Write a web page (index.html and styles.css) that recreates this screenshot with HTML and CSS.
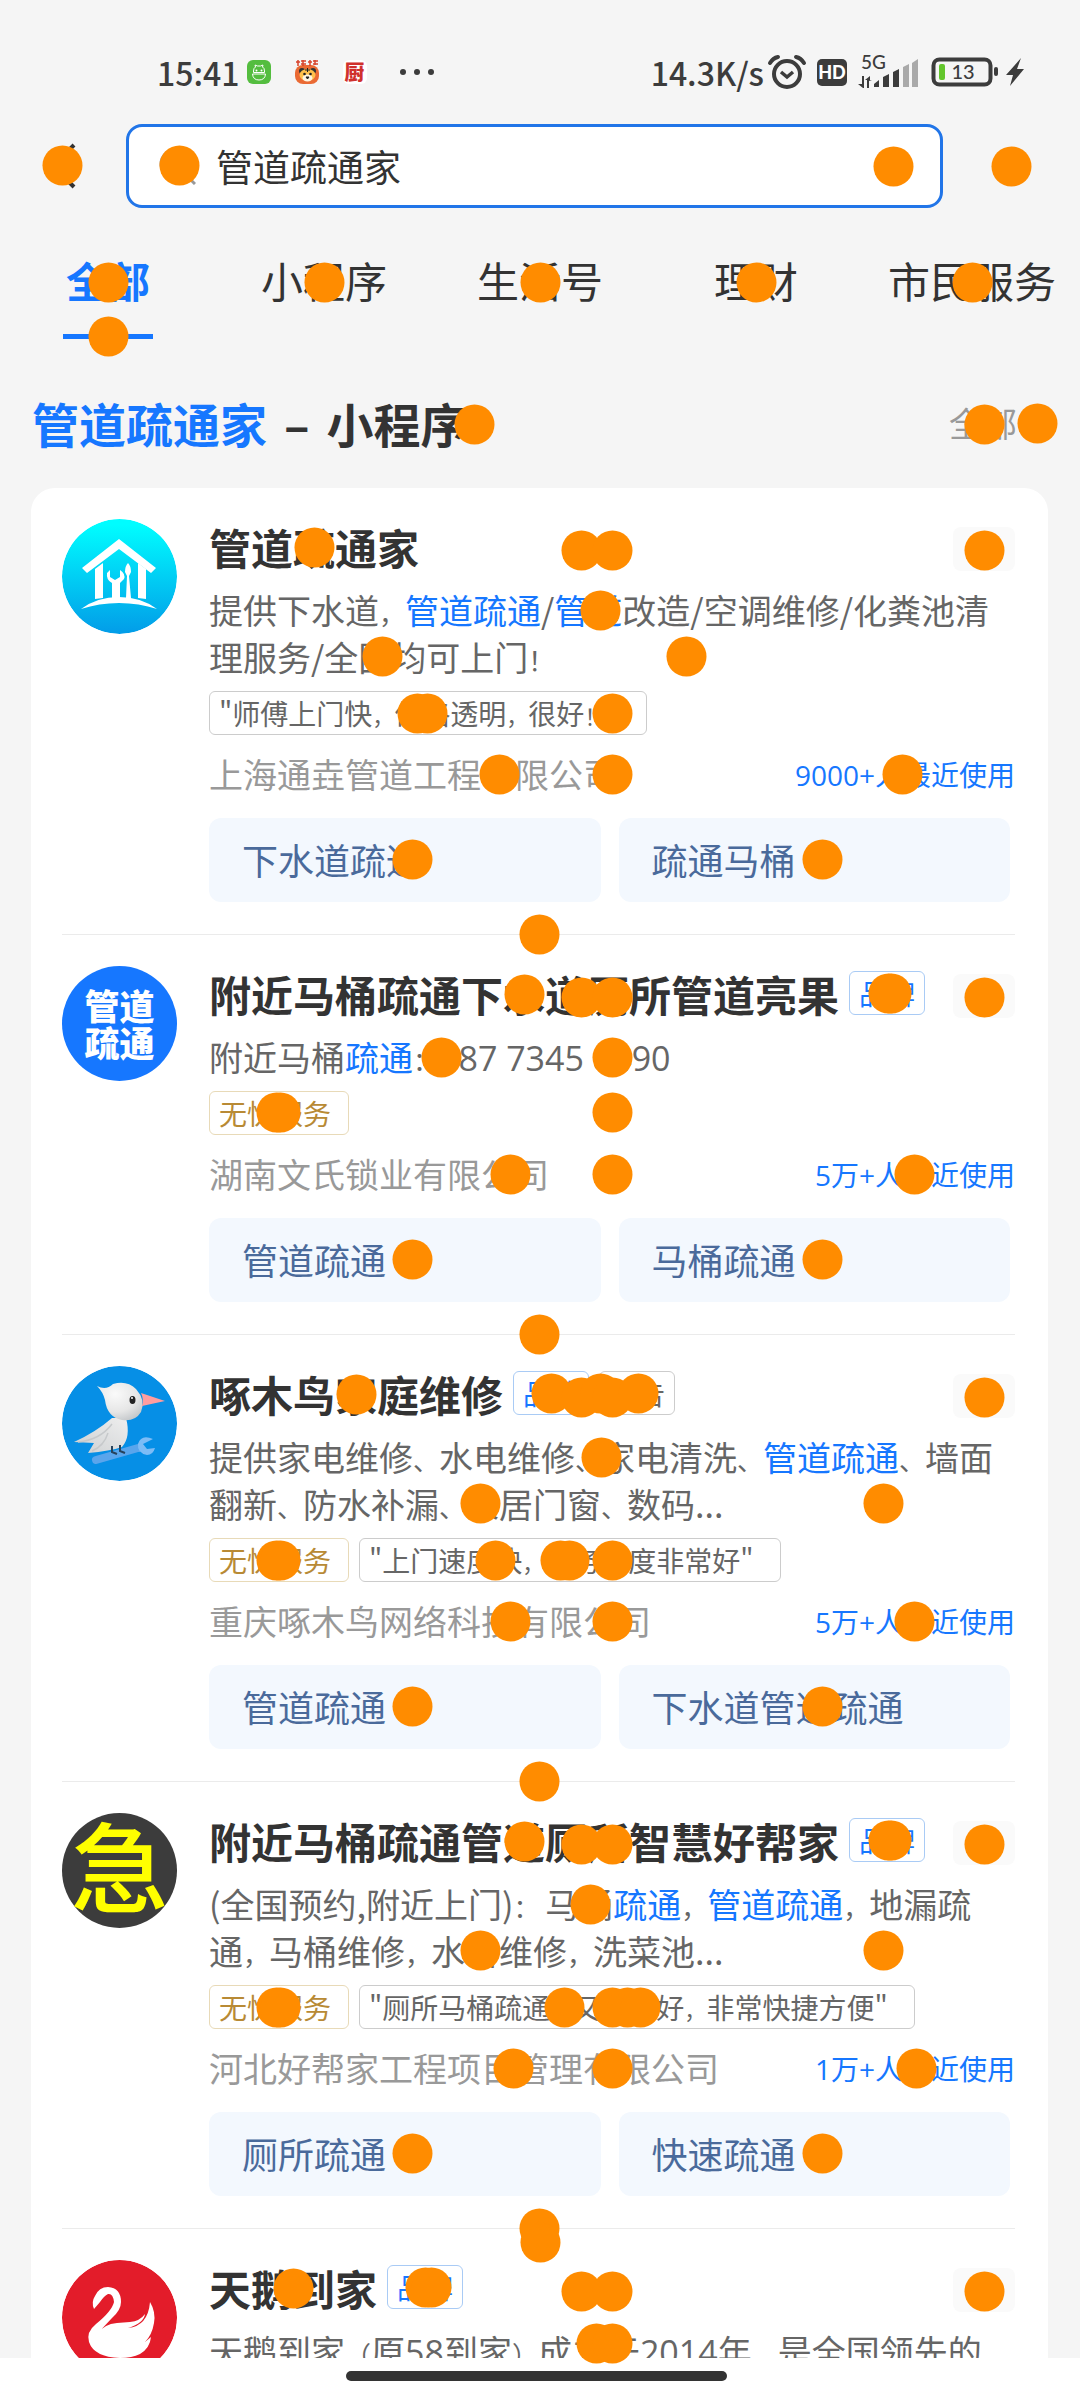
FILE: index.html
```html
<!DOCTYPE html>
<html lang="zh-CN">
<head>
<meta charset="utf-8">
<meta name="viewport" content="width=device-width, initial-scale=1">
<title>管道疏通家</title>
<link rel="stylesheet" href="styles.css">
</head>
<body>
<div class="status">
  <span class="status-text">15:41</span>
  <div class="status-apps">
    <svg width="24" height="24" viewBox="0 0 24 24"><rect width="24" height="24" rx="6" fill="#54bd3f"/><path d="M6.500 12.500V11q0-3 2-4L8 5l2.500 1h3L16 5l-.5 2q2 1 2 4v1.500zM5.500 14h13q-.5 6-6.500 6t-6.500-6z" fill="none" stroke="#fff" stroke-width="1"/><circle cx="9.500" cy="10.500" r="1" fill="#fff"/><circle cx="14.500" cy="10.500" r="1" fill="#fff"/></svg>
    <svg width="24" height="24" viewBox="0 0 24 24"><rect y="5" width="24" height="19" rx="8" fill="#ea6a34"/><path d="M1 2h4M3 0v6M6 1h5M8 0v6M6 4h5M13 2h4M15 0v6M18 1h5M20 0v5M18 4h5" stroke="#d8432c" stroke-width="1.500"/><circle cx="7" cy="11" r="3" fill="#333"/><circle cx="18" cy="11" r="3" fill="#333"/><ellipse cx="12.500" cy="15" rx="8" ry="6" fill="#ffc04a"/><ellipse cx="12.500" cy="18" rx="5" ry="3.500" fill="#fff6e2"/><circle cx="9.500" cy="14" r="1.300" fill="#222"/><circle cx="15.500" cy="14" r="1.300" fill="#222"/><path d="M11 17h3l-1.500 2zM10 10h5M12.500 8v4" stroke="#222" fill="#222"/></svg>
    <span class="app-chef">厨</span>
  </div>
  <svg class="status-more" width="34" height="8" viewBox="0 0 34 8" fill="#3c3c3c"><circle cx="3" cy="4" r="3"/><circle cx="17" cy="4" r="3"/><circle cx="31" cy="4" r="3"/></svg>
  <span class="status-text status-speed">14.3K/s</span>
  <svg class="status-icons" width="260" height="36" viewBox="0 0 260 36">
    <g fill="none" stroke="#3c3c3c"><circle cx="23" cy="20" r="13" stroke-width="4"/><path d="M17 18l6 5 6-5" stroke-width="3.500"/><path d="M6 9Q9 4 14 3M40 9Q37 4 32 3" stroke-width="4" stroke-linecap="round"/></g>
    <rect x="53" y="5" width="30" height="27" rx="5" fill="#3c3c3c"/><text class="svg-hd" x="68" y="25">HD</text>
    <text class="svg-5g" x="97" y="15">5G</text>
    <g fill="#3c3c3c"><path d="M98 22v8h-4l5 4h1V22zM103 34v-8h-2l5-4v4h2l-3 1v7z"/><path d="M110 33v-3l5-4v7zM119 33V23l6-3v13zM129 33V18l6-3v18z"/></g>
    <path d="M139 33V13l6-3v23zM148 33V9l6-4v28z" fill="#a9a9a9"/>
    <rect x="169.500" y="5.500" width="57" height="25" rx="6" fill="none" stroke="#3c3c3c" stroke-width="4"/><rect x="175" y="10" width="6" height="16" rx="2" fill="#62c52c"/><text class="svg-bat" x="199" y="25">13</text><rect x="230" y="13" width="4" height="9" rx="2" fill="#3c3c3c"/>
    <path d="M257 4l-15 17h7l-3 11 14-17h-7z" fill="#3c3c3c"/>
  </svg>
</div>

<form class="search">
  <button type="button" class="icon-btn" aria-label="返回"><svg width="28" height="48" viewBox="0 0 28 48"><path d="M25 3L4 24l21 21" fill="none" stroke="#333" stroke-width="4"/></svg></button>
  <div class="search-box">
    <svg width="38" height="38" viewBox="0 0 38 38"><circle cx="17" cy="17" r="14" fill="none" stroke="#999" stroke-width="3"/><path d="M27 27l10 10" stroke="#999" stroke-width="3"/></svg>
    <input type="text" value="管道疏通家" aria-label="搜索">
    <button type="reset" class="clear-btn" aria-label="清除"><svg width="36" height="36" viewBox="0 0 36 36"><circle cx="18" cy="18" r="16" fill="#ccc"/><path d="M12 12l12 12M24 12L12 24" stroke="#fff" stroke-width="3"/></svg></button>
  </div>
  <button type="button" class="icon-btn" aria-label="更多"><svg width="36" height="8" viewBox="0 0 36 8" fill="#333"><circle cx="4" cy="4" r="3"/><circle cx="18" cy="4" r="3"/><circle cx="32" cy="4" r="3"/></svg></button>
</form>

<nav class="tabs">
  <a href="#" class="tab tab-active">全部</a>
  <a href="#" class="tab">小程序</a>
  <a href="#" class="tab">生活号</a>
  <a href="#" class="tab">理财</a>
  <a href="#" class="tab">市民服务</a>
</nav>

<header class="section-head">
  <h1><em>管道疏通家</em><span class="dash">–</span>小程序</h1>
  <a href="#" class="more">全部<svg width="16" height="26" viewBox="0 0 16 26"><path d="M3 3l10 10L3 23" fill="none" stroke="#999" stroke-width="3"/></svg></a>
</header>

<main class="results">
  <article class="item">
    <svg class="avatar" viewBox="0 0 115 115">
      <defs><linearGradient id="sky" x1="0" y1="0" x2="0" y2="1"><stop offset="0.050" stop-color="#00fdff"/><stop offset="1" stop-color="#029ce8"/></linearGradient></defs>
      <circle cx="57.500" cy="57.500" r="57.500" fill="url(#sky)"/>
      <g fill="#fff"><path d="M57 20l37 29-5 5-32-24-32 24-5-5z"/><path d="M33 50l8-6v35l-8 1zM76 44l8 6v30l-8-1z"/><path d="M19 90q16-12 38-12t38 12q-18-6-38-6t-38 6z"/><path d="M50 80V64q-6-3-5-10l3-3v7l5 3 5-3v-7q6 4 4 9l-4 4v16zM64 79l1-22-2-4q0-6 3-9 3 3 3 9l-2 4 2 22z"/></g>
    </svg>
    <div class="body">
      <div class="title-row"><h2>管道疏通家</h2><button class="feedback" aria-label="反馈"><i></i></button></div>
      <p class="desc">提供下水道<s>，</s><em>管道疏通</em>/<em>管道</em>改造/空调维修/化粪池清<br>理服务/全国均可上门<s>！</s></p>
      <div class="tags"><span class="tag tag-quote">"师傅上门快<s>，</s>价格透明<s>，</s>很好<s>！</s>"</span></div>
      <div class="meta"><span>上海通垚管道工程有限公司</span><strong><span class="num">9000+</span>人最近使用</strong></div>
      <div class="links"><a href="#">下水道疏通</a><a href="#">疏通马桶</a></div>
    </div>
  </article>

  <article class="item">
    <div class="avatar avatar-blue">管道<br>疏通</div>
    <div class="body">
      <div class="title-row"><h2>附近马桶疏通下水道厕所管道亮果</h2><span class="tag tag-brand">品牌</span><button class="feedback" aria-label="反馈"><i></i></button></div>
      <p class="desc">附近马桶<em>疏通</em><s>：</s><span class="num">187 7345 8490</span></p>
      <div class="tags"><span class="tag tag-gold">无忧服务</span></div>
      <div class="meta"><span>湖南文氏锁业有限公司</span><strong><span class="num">5</span>万<span class="num">+</span>人最近使用</strong></div>
      <div class="links"><a href="#">管道疏通</a><a href="#">马桶疏通</a></div>
    </div>
  </article>

  <article class="item">
    <svg class="avatar" viewBox="0 0 115 115">
      <defs><radialGradient id="head" cx="0.400" cy="0.300" r="0.800"><stop offset="0" stop-color="#fafafa"/><stop offset="0.600" stop-color="#e6e6e6"/><stop offset="1" stop-color="#bfc3c6"/></radialGradient><linearGradient id="wing" x1="1" y1="0" x2="0" y2="1"><stop offset="0" stop-color="#eee"/><stop offset="1" stop-color="#cdd0d2"/></linearGradient></defs>
      <circle cx="57.500" cy="57.500" r="57.500" fill="#068fe6"/>
      <path d="M34 94l42-12" stroke="#5aa5ec" stroke-width="8" stroke-linecap="round"/><path d="M91 73q-12-5-15 5-1 9 9 11 6 0 8-7l-8 1-4-5z" fill="#7dbcf6"/>
      <path d="M50 52Q34 66 12 76l20 1-6 10q22-2 34-6 9-10 4-29z" fill="url(#wing)"/><path d="M16 76q22-2 34-18M30 85q12-5 16-18" fill="none" stroke="#c6c9cb" stroke-width="1.500"/>
      <path d="M35 20q9 5 16-2 14-4 23 5 10 11 5 23-6 10-19 8-15-3-17-20-2-8-8-14z" fill="url(#head)"/>
      <path d="M79 27l24 8-23 5q2-7-1-13z" fill="#ff9d9f"/><ellipse cx="70.500" cy="34" rx="3" ry="4" fill="#222"/><circle cx="70" cy="32" r="1" fill="#fff"/>
      <path d="M50 80v6l5 2M58 79v6l5 2" fill="none" stroke="#27435d" stroke-width="2"/>
    </svg>
    <div class="body">
      <div class="title-row"><h2>啄木鸟家庭维修</h2><span class="tag tag-brand">品牌</span><span class="tag tag-ad">广告</span><button class="feedback" aria-label="反馈"><i></i></button></div>
      <p class="desc">提供家电维修<s>、</s>水电维修<s>、</s>家电清洗<s>、</s><em>管道疏通</em><s>、</s>墙面<br>翻新<s>、</s>防水补漏<s>、</s>家居门窗<s>、</s>数码...</p>
      <div class="tags"><span class="tag tag-gold">无忧服务</span><span class="tag tag-quote">"上门速度快<s>，</s>服务态度非常好"</span></div>
      <div class="meta"><span>重庆啄木鸟网络科技有限公司</span><strong><span class="num">5</span>万<span class="num">+</span>人最近使用</strong></div>
      <div class="links"><a href="#">管道疏通</a><a href="#">下水道管道疏通</a></div>
    </div>
  </article>

  <article class="item">
    <div class="avatar avatar-dark">急</div>
    <div class="body">
      <div class="title-row"><h2>附近马桶疏通管道厕所智慧好帮家</h2><span class="tag tag-brand">品牌</span><button class="feedback" aria-label="反馈"><i></i></button></div>
      <p class="desc">(全国预约,附近上门)<s>： </s>马桶<em>疏通</em><s>，</s><em>管道疏通</em><s>，</s>地漏疏<br>通<s>，</s>马桶维修<s>，</s>水管维修<s>，</s>洗菜池...</p>
      <div class="tags"><span class="tag tag-gold">无忧服务</span><span class="tag tag-quote">"厕所马桶疏通<s>，</s>又快又好<s>，</s>非常快捷方便"</span></div>
      <div class="meta"><span>河北好帮家工程项目管理有限公司</span><strong><span class="num">1</span>万<span class="num">+</span>人最近使用</strong></div>
      <div class="links"><a href="#">厕所疏通</a><a href="#">快速疏通</a></div>
    </div>
  </article>

  <article class="item">
    <svg class="avatar" viewBox="0 0 115 115">
      <circle cx="57.500" cy="57.500" r="57.500" fill="#e31c2a"/>
      <path d="M32 49Q29 42 33 36 37 27 46 27 59 28 59 42 59 50 50 58L35 74Q42 64 55 63L68 62Q78 61 83 54 82 63 66 68 86 66 88 42 94 52 92 63 90 75 83 82L89 77Q88 88 78 94 70 98 58 98 32 97 27 82 24 72 34 64 50 51 52 42 51 33 46 34 42 36 38 42z" fill="#fff"/>
    </svg>
    <div class="body">
      <div class="title-row"><h2>天鹅到家</h2><span class="tag tag-brand">品牌</span><button class="feedback" aria-label="反馈"><i></i></button></div>
      <p class="desc">天鹅到家<s>（</s>原<span class="num">58</span>到家<s>）</s>成立于<span class="num">2014</span>年<s>，</s>是全国领先的</p>
    </div>
  </article>
</main>

<footer class="home-bar"><i></i></footer>

<svg class="markers" width="1080" height="2400" viewBox="0 0 1080 2400" aria-hidden="true">
  <defs><circle id="m" cx="0.500" cy="0.500" r="20"/></defs>
  <g fill="#ff8c00">
    <use href="#m" x="62" y="165"/><use href="#m" x="179" y="165"/><use href="#m" x="893" y="166"/><use href="#m" x="1011" y="166"/>
    <use href="#m" x="108" y="282"/><use href="#m" x="324" y="282"/><use href="#m" x="540" y="282"/><use href="#m" x="756" y="282"/><use href="#m" x="972" y="282"/><use href="#m" x="108" y="336"/>
    <use href="#m" x="474" y="424"/><use href="#m" x="984" y="424"/><use href="#m" x="1037" y="423"/>
    <use href="#m" x="314" y="547"/><use href="#m" x="581" y="550"/><use href="#m" x="612" y="550"/><use href="#m" x="984" y="550"/>
    <use href="#m" x="600" y="610"/><use href="#m" x="382" y="656"/><use href="#m" x="686" y="656"/>
    <use href="#m" x="417" y="713"/><use href="#m" x="427" y="713"/><use href="#m" x="612" y="713"/>
    <use href="#m" x="499" y="774"/><use href="#m" x="612" y="774"/><use href="#m" x="902" y="774"/>
    <use href="#m" x="412" y="859"/><use href="#m" x="822" y="859"/><use href="#m" x="539" y="934"/>
    <use href="#m" x="524" y="994"/><use href="#m" x="581" y="997"/><use href="#m" x="612" y="997"/><use href="#m" x="888" y="993"/><use href="#m" x="891" y="993"/><use href="#m" x="984" y="997"/>
    <use href="#m" x="441" y="1057"/><use href="#m" x="612" y="1057"/><use href="#m" x="276" y="1112"/><use href="#m" x="280" y="1112"/><use href="#m" x="612" y="1112"/>
    <use href="#m" x="510" y="1174"/><use href="#m" x="612" y="1174"/><use href="#m" x="914" y="1174"/>
    <use href="#m" x="412" y="1259"/><use href="#m" x="822" y="1259"/><use href="#m" x="539" y="1334"/>
    <use href="#m" x="356" y="1394"/><use href="#m" x="551" y="1393"/><use href="#m" x="581" y="1397"/><use href="#m" x="600" y="1393"/><use href="#m" x="612" y="1397"/><use href="#m" x="638" y="1393"/><use href="#m" x="984" y="1397"/>
    <use href="#m" x="601" y="1457"/><use href="#m" x="480" y="1503"/><use href="#m" x="883" y="1503"/>
    <use href="#m" x="276" y="1560"/><use href="#m" x="280" y="1560"/><use href="#m" x="495" y="1560"/><use href="#m" x="560" y="1560"/><use href="#m" x="569" y="1560"/><use href="#m" x="612" y="1560"/>
    <use href="#m" x="510" y="1621"/><use href="#m" x="612" y="1621"/><use href="#m" x="914" y="1621"/>
    <use href="#m" x="412" y="1706"/><use href="#m" x="822" y="1706"/><use href="#m" x="539" y="1781"/>
    <use href="#m" x="524" y="1841"/><use href="#m" x="581" y="1844"/><use href="#m" x="612" y="1844"/><use href="#m" x="888" y="1840"/><use href="#m" x="891" y="1840"/><use href="#m" x="984" y="1844"/>
    <use href="#m" x="590" y="1904"/><use href="#m" x="480" y="1950"/><use href="#m" x="883" y="1950"/>
    <use href="#m" x="276" y="2007"/><use href="#m" x="280" y="2007"/><use href="#m" x="564" y="2007"/><use href="#m" x="612" y="2007"/><use href="#m" x="627" y="2007"/><use href="#m" x="640" y="2007"/>
    <use href="#m" x="513" y="2068"/><use href="#m" x="612" y="2068"/><use href="#m" x="916" y="2068"/>
    <use href="#m" x="412" y="2153"/><use href="#m" x="822" y="2153"/><use href="#m" x="539" y="2228"/><use href="#m" x="540" y="2242"/>
    <use href="#m" x="293" y="2288"/><use href="#m" x="425" y="2287"/><use href="#m" x="431" y="2287"/><use href="#m" x="581" y="2291"/><use href="#m" x="612" y="2291"/><use href="#m" x="984" y="2291"/>
    <use href="#m" x="596" y="2343"/><use href="#m" x="612" y="2343"/>
  </g>
</svg>
</body>
</html>
```
FILE: styles.css
```css
* { box-sizing: border-box; margin: 0; padding: 0; }
body {
  position: relative;
  display: flex;
  flex-direction: column;
  height: 100vh;
  overflow: hidden;
  background: #f5f5f5;
  color: #333;
  font-family: "Noto Sans CJK SC", sans-serif;
}
a { color: inherit; text-decoration: none; }
button { border: 0; background: none; font: inherit; }
em { font-style: normal; color: #1677ff; }
svg { display: block; flex: none; }
.num { font-family: "Open Sans", sans-serif; }

/* status bar */
.status {
  display: flex;
  flex: none;
  align-items: center;
  height: 124px;
  padding: 20px 56px 0 157px;
  color: #3c3c3c;
}
.status-text { font-size: 32px; line-height: 36px; font-weight: 500; }
.status-apps { display: flex; gap: 24px; margin: 0 33px 0 7px; }
.app-chef {
  width: 24px;
  height: 24px;
  border-radius: 6px;
  background: #fff;
  color: #d0312d;
  font-size: 20px;
  line-height: 24px;
  font-weight: 900;
  text-align: center;
}
.status-speed { margin-left: auto; }
.svg-hd, .svg-5g, .svg-bat { font-family: Lato, sans-serif; }
.svg-hd { fill: #fff; font-size: 18px; font-weight: 900; text-anchor: middle; }
.svg-5g { fill: #3c3c3c; font-size: 19px; font-weight: 500; }
.svg-bat { fill: #3c3c3c; font-size: 20px; font-weight: 500; text-anchor: middle; }

/* search */
.search { display: grid; flex: none; grid-template-columns: 126px 1fr 137px; height: 84px; }
.icon-btn { display: flex; align-items: center; justify-content: center; }
.search-box {
  display: flex;
  align-items: center;
  gap: 20px;
  padding: 0 29px;
  border: 3px solid #2175e8;
  border-radius: 16px;
  background: #fff;
}
.search-box input {
  flex: 1;
  min-width: 0;
  border: 0;
  outline: 0;
  background: none;
  color: #333;
  font: 37px/54px "Noto Sans CJK SC", sans-serif;
}

/* tabs */
.tabs { display: grid; flex: none; grid-template-columns: repeat(5, 1fr); padding-top: 48px; }
.tab {
  display: flex;
  flex-direction: column;
  align-items: center;
  gap: 30px;
  font-size: 42px;
  line-height: 48px;
  white-space: nowrap;
}
.tab::after { content: ""; width: 90px; height: 5px; }
.tab-active { color: #1677ff; font-weight: 700; }
.tab-active::after { background: #1677ff; }

/* section heading */
.section-head {
  display: flex;
  flex: none;
  align-items: center;
  justify-content: space-between;
  margin: 54px 35px 35px 32px;
}
.section-head h1 { font-size: 47px; line-height: 60px; font-weight: 700; }
.dash { margin: 0 17px; }
.more { display: flex; align-items: center; gap: 12px; color: #999; font-size: 34px; line-height: 46px; }

/* results */
.results {
  flex: 1;
  min-height: 0;
  margin: 0 32px 0 31px;
  padding: 0 33px 0 31px;
  overflow: hidden;
  border-radius: 24px 24px 0 0;
  background: #fff;
}
.item { display: flex; gap: 32px; padding: 31px 0 32px; }
.item + .item { border-top: 1px solid #ebebeb; }
.avatar { flex: none; width: 115px; height: 115px; border-radius: 50%; text-align: center; }
.avatar-blue {
  padding-top: 20px;
  background: #1677ff;
  color: #fff;
  font-size: 35px;
  line-height: 37px;
  font-weight: 900;
}
.avatar-dark { background: #3c3c3c; color: #ff0; font-size: 98px; line-height: 98px; font-weight: 500; }
.body { flex: 1; min-width: 0; }
.title-row { display: flex; align-items: center; gap: 10px; height: 56px; }
.title-row h2 { font-size: 42px; line-height: 56px; font-weight: 700; white-space: nowrap; }
.title-row .tag { margin-bottom: 2px; }
.feedback {
  display: flex;
  align-items: center;
  justify-content: center;
  width: 62px;
  height: 44px;
  margin-top: 4px;
  margin-left: auto;
  border-radius: 8px;
  background: #fafafa;
}
.feedback i { width: 20px; height: 4px; background: #ccc; }
.desc { margin: 11px 0; color: #666; font-size: 34px; line-height: 47px; height: auto; white-space: nowrap; }
.desc .num { line-height: 1; }

/* compact punctuation */
s { text-decoration: none; font-size: 26px; line-height: 1; }
.tag s { font-size: 22px; }

.tags { display: flex; gap: 10px; }
.tag {
  flex: none;
  height: 44px;
  padding: 0 9px;
  border: 1px solid;
  border-radius: 6px;
  font-size: 28px;
  line-height: 42px;
  white-space: nowrap;
}
.tag-quote { padding-right: 26px; border-color: #ccc; color: #666; }
.tag-gold { padding-right: 17px; border-color: #e8dab8; color: #b88a35; }
.tag-brand { border-color: #a9cbf5; color: #1677ff; }
.tag-ad { border-color: #ccc; color: #666; }
.meta {
  display: flex;
  align-items: center;
  justify-content: space-between;
  margin: 16px 0 21px;
  color: #999;
  font-size: 34px;
  line-height: 46px;
}
.meta strong { color: #1677ff; font-size: 28px; line-height: 46px; font-weight: 400; }
.meta .num { line-height: 1; }
.links { display: grid; grid-template-columns: 1fr 1fr; gap: 18px; margin-right: 5px; }
.links a {
  padding: 0 33px 2px;
  border-radius: 12px;
  background: #f3f8fe;
  color: #4a6a9b;
  font-size: 36px;
  line-height: 82px;
}

.home-bar { display: flex; flex: none; justify-content: center; height: 42px; padding: 13px 7px 0 0; background: #fff; }
.home-bar i { width: 381px; height: 10px; border-radius: 5px; background: #333; }

.markers { position: absolute; top: 0; left: 0; pointer-events: none; }
```
